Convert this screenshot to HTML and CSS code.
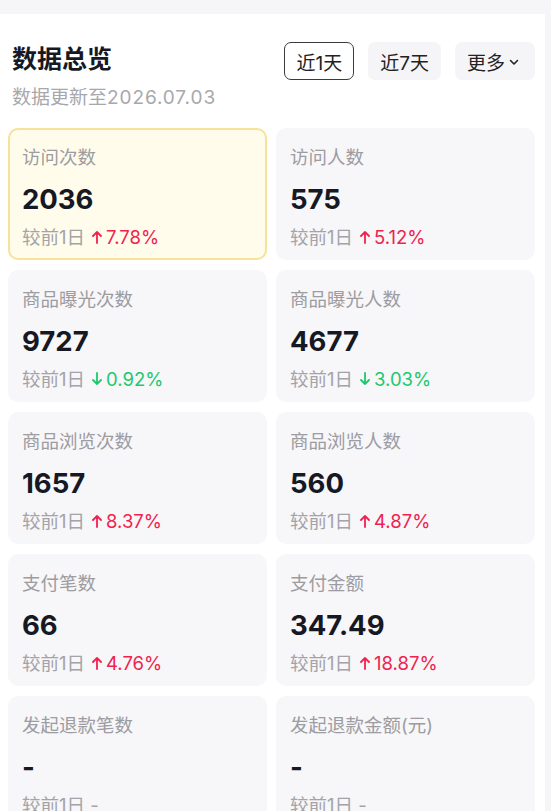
FILE: index.html
```html
<!DOCTYPE html>
<html lang="zh">
<head>
<meta charset="utf-8">
<link rel="stylesheet" href="styles.css">
</head>
<body>
<div class="panel">
  <div class="head">
    <h1 class="title">数据总览</h1>
    <div class="tabs">
      <span class="tab active">近1天</span>
      <span class="tab">近7天</span>
      <span class="tab more">更多<svg class="chev" width="10" height="7" viewBox="0 0 10 7"><path d="M1.5 1.5 L5 5 L8.5 1.5" fill="none" stroke="#222" stroke-width="1.6" stroke-linecap="round" stroke-linejoin="round"/></svg></span>
    </div>
  </div>
  <div class="sub">数据更新至<span class="date">2026.07.03</span></div>

  <div class="grid">
    <div class="card hl">
      <div class="label">访问次数</div>
      <div class="value">2036</div>
      <div class="cmp">较前1日<span class="up"><svg class="arr" width="10" height="14" viewBox="0 0 10 14"><path d="M5 13 V2 M1 6 L5 2 L9 6" fill="none" stroke="currentColor" stroke-width="1.8" stroke-linecap="round" stroke-linejoin="round"/></svg>7.78%</span></div>
    </div>
    <div class="card">
      <div class="label">访问人数</div>
      <div class="value">575</div>
      <div class="cmp">较前1日<span class="up"><svg class="arr" width="10" height="14" viewBox="0 0 10 14"><path d="M5 13 V2 M1 6 L5 2 L9 6" fill="none" stroke="currentColor" stroke-width="1.8" stroke-linecap="round" stroke-linejoin="round"/></svg>5.12%</span></div>
    </div>
    <div class="card">
      <div class="label">商品曝光次数</div>
      <div class="value">9727</div>
      <div class="cmp">较前1日<span class="down"><svg class="arr" width="10" height="14" viewBox="0 0 10 14"><path d="M5 1 V12 M1 8 L5 12 L9 8" fill="none" stroke="currentColor" stroke-width="1.8" stroke-linecap="round" stroke-linejoin="round"/></svg>0.92%</span></div>
    </div>
    <div class="card">
      <div class="label">商品曝光人数</div>
      <div class="value">4677</div>
      <div class="cmp">较前1日<span class="down"><svg class="arr" width="10" height="14" viewBox="0 0 10 14"><path d="M5 1 V12 M1 8 L5 12 L9 8" fill="none" stroke="currentColor" stroke-width="1.8" stroke-linecap="round" stroke-linejoin="round"/></svg>3.03%</span></div>
    </div>
    <div class="card">
      <div class="label">商品浏览次数</div>
      <div class="value">1657</div>
      <div class="cmp">较前1日<span class="up"><svg class="arr" width="10" height="14" viewBox="0 0 10 14"><path d="M5 13 V2 M1 6 L5 2 L9 6" fill="none" stroke="currentColor" stroke-width="1.8" stroke-linecap="round" stroke-linejoin="round"/></svg>8.37%</span></div>
    </div>
    <div class="card">
      <div class="label">商品浏览人数</div>
      <div class="value">560</div>
      <div class="cmp">较前1日<span class="up"><svg class="arr" width="10" height="14" viewBox="0 0 10 14"><path d="M5 13 V2 M1 6 L5 2 L9 6" fill="none" stroke="currentColor" stroke-width="1.8" stroke-linecap="round" stroke-linejoin="round"/></svg>4.87%</span></div>
    </div>
    <div class="card">
      <div class="label">支付笔数</div>
      <div class="value">66</div>
      <div class="cmp">较前1日<span class="up"><svg class="arr" width="10" height="14" viewBox="0 0 10 14"><path d="M5 13 V2 M1 6 L5 2 L9 6" fill="none" stroke="currentColor" stroke-width="1.8" stroke-linecap="round" stroke-linejoin="round"/></svg>4.76%</span></div>
    </div>
    <div class="card">
      <div class="label">支付金额</div>
      <div class="value">347.49</div>
      <div class="cmp">较前1日<span class="up"><svg class="arr" width="10" height="14" viewBox="0 0 10 14"><path d="M5 13 V2 M1 6 L5 2 L9 6" fill="none" stroke="currentColor" stroke-width="1.8" stroke-linecap="round" stroke-linejoin="round"/></svg>18.87%</span></div>
    </div>
    <div class="card">
      <div class="label">发起退款笔数</div>
      <div class="value">-</div>
      <div class="cmp">较前1日 -</div>
    </div>
    <div class="card">
      <div class="label">发起退款金额(元)</div>
      <div class="value">-</div>
      <div class="cmp">较前1日 -</div>
    </div>
  </div>
</div>
</body>
</html>
```
FILE: styles.css
```css
html, body {
  margin: 0;
  padding: 0;
}
body {
  background: #f6f6f8;
  font-family: "Inter", "Noto Sans CJK SC", sans-serif;
  color: #161823;
  overflow: hidden;
}
.panel {
  margin-top: 14px;
  width: 545px;
  background: #ffffff;
  padding: 28px 10px 20px 8px;
  box-sizing: border-box;
  min-height: 900px;
}
.head {
  display: flex;
  justify-content: space-between;
  align-items: flex-start;
}
.title {
  margin: 0 0 0 4px;
  font-size: 25px;
  line-height: 34px;
  font-weight: 700;
  color: #161823;
}
.tabs {
  display: flex;
  gap: 14px;
}
.tab {
  display: inline-flex;
  align-items: center;
  height: 38px;
  box-sizing: border-box;
  padding: 0 12px;
  border-radius: 7px;
  background: #f5f5f7;
  font-size: 19px;
  color: #222;
}
.tab.active {
  background: #fff;
  border: 1.5px solid #3a3a3f;
  padding: 0 11px;
}
.tab.more {
  padding: 0 16px 0 12px;
}
.chev {
  margin-left: 4px;
  margin-top: 2px;
}
.sub {
  margin: 5px 0 0 4px;
  font-size: 19px;
  line-height: 26px;
  color: #a8a8ac;
}
.date {
  letter-spacing: 0.9px;
}
.grid {
  margin-top: 17px;
  display: grid;
  grid-template-columns: 1fr 1fr;
  column-gap: 9px;
  row-gap: 10px;
}
.card {
  height: 132px;
  box-sizing: border-box;
  background: #f7f6f9;
  border-radius: 10px;
  padding: 17px 14px 0 14px;
}
.card.hl {
  background: #fffcec;
  border: 2px solid #f7e29a;
  padding: 15px 12px 0 12px;
}
.label {
  font-size: 18.5px;
  line-height: 24px;
  color: #9c9ca1;
}
.value {
  margin-top: 12px;
  font-size: 27.5px;
  line-height: 36px;
  font-weight: 700;
  color: #161823;
}
.cmp {
  margin-top: 8px;
  font-size: 18.5px;
  line-height: 24px;
  color: #a3a3a8;
  display: flex;
  align-items: center;
}
.up, .down {
  display: inline-flex;
  align-items: center;
  margin-left: 7px;
}
.up { color: #f0224e; }
.down { color: #1cc96c; }
.arr {
  margin-right: 4px;
}
```
